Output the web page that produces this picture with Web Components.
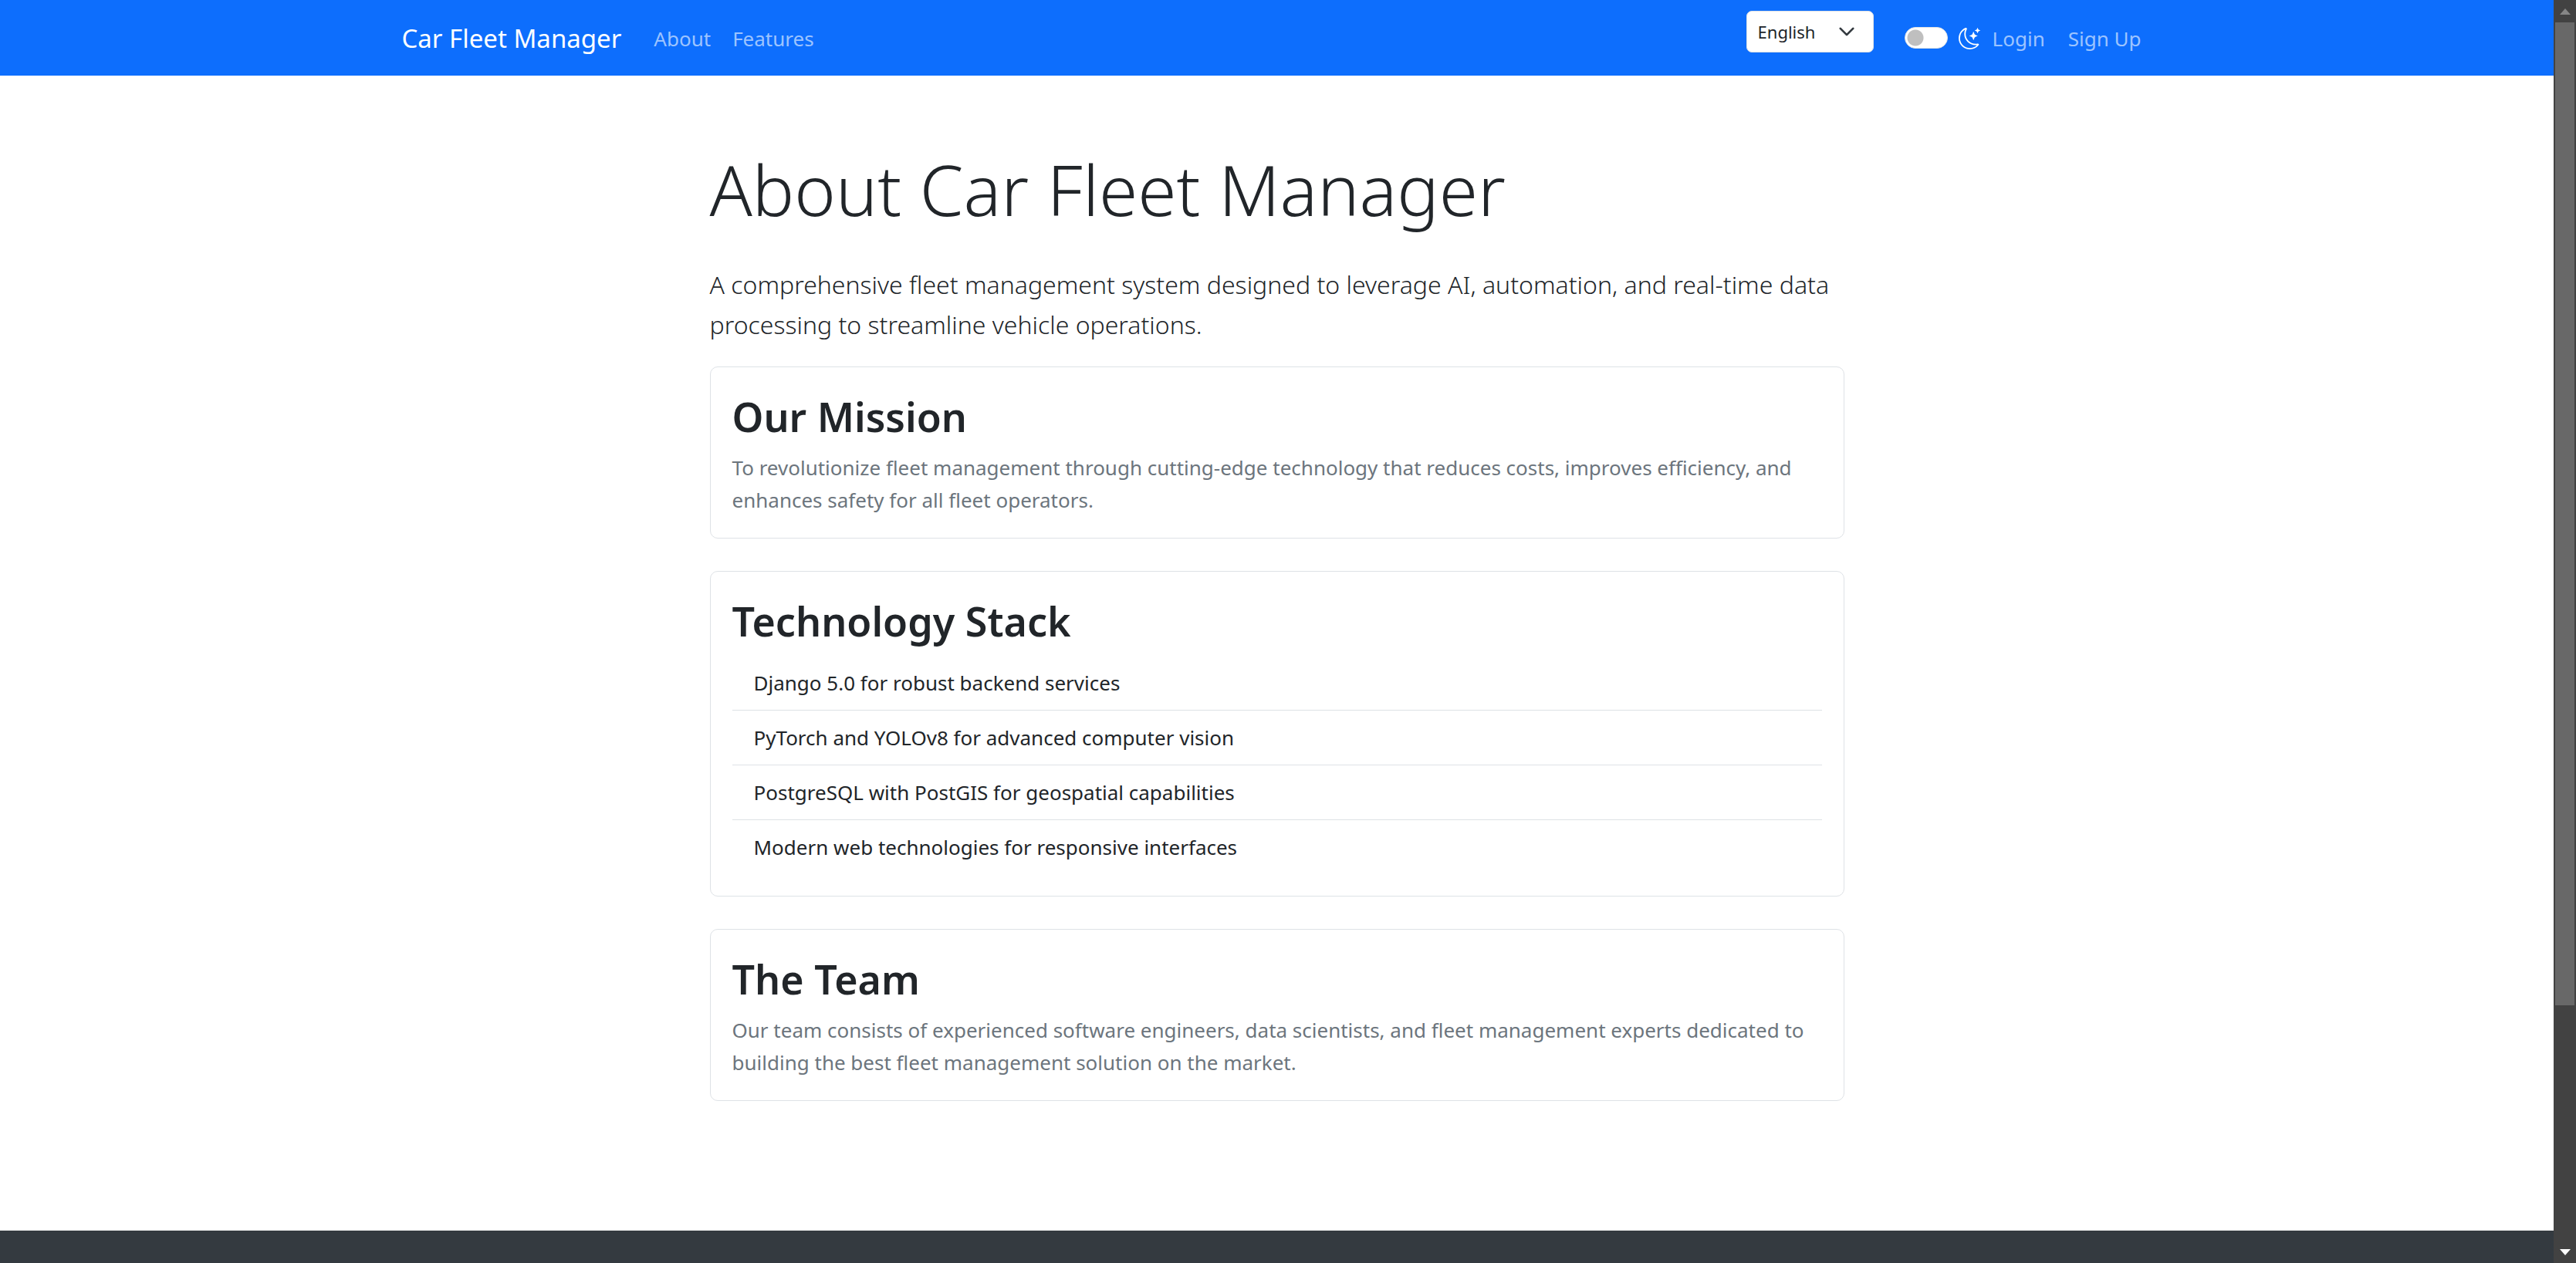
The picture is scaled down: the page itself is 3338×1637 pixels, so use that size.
<!DOCTYPE html>
<html lang="en">
<head>
<meta charset="utf-8">
<title>About - Car Fleet Manager</title>
<style>
  html, body { margin: 0; height: 100%; }
  body {
    display: flex;
    overflow: hidden;
    background: #fff;
    color: #212529;
    font: 400 26px/42px "Noto Sans", "Open Sans", sans-serif;
  }
</style>
</head>
<body>
<fleet-page>
  <fleet-navbar slot="header" brand="Car Fleet Manager">
    <nav-link href="#about">About</nav-link>
    <nav-link href="#features">Features</nav-link>
    <language-select slot="end"></language-select>
    <theme-switch slot="end"></theme-switch>
    <nav-link slot="end" href="#login">Login</nav-link>
    <nav-link slot="end" href="#signup">Sign Up</nav-link>
  </fleet-navbar>
  <about-intro>
    <span slot="title">About Car Fleet Manager</span>
    A comprehensive fleet management system designed to leverage AI, automation, and real-time data processing to streamline vehicle operations.
  </about-intro>
  <info-card heading="Our Mission">
    <muted-text>To revolutionize fleet management through cutting-edge technology that reduces costs, improves efficiency, and enhances safety for all fleet operators.</muted-text>
  </info-card>
  <info-card heading="Technology Stack">
    <tech-list>
      <tech-item>Django 5.0 for robust backend services</tech-item>
      <tech-item>PyTorch and YOLOv8 for advanced computer vision</tech-item>
      <tech-item>PostgreSQL with PostGIS for geospatial capabilities</tech-item>
      <tech-item>Modern web technologies for responsive interfaces</tech-item>
    </tech-list>
  </info-card>
  <info-card heading="The Team">
    <muted-text>Our team consists of experienced software engineers, data scientists, and fleet management experts dedicated to building the best fleet management solution on the market.</muted-text>
  </info-card>
</fleet-page>
<page-scrollbar></page-scrollbar>

<script>
const define = (name, render) => customElements.define(name, class extends HTMLElement {
  constructor() {
    super();
    this.attachShadow({ mode: "open" }).innerHTML = render(this);
  }
});

define("fleet-page", () => `
  <style>
    :host { flex: 1; min-width: 0; height: 100vh; overflow: hidden; display: flex; flex-direction: column; }
    header { flex: none; }
    main {
      flex: none; box-sizing: border-box; width: 100%; max-width: 1470px;
      margin: 0 auto; padding: 84px 0 168px;
      display: flex; flex-direction: column; gap: 42px;
    }
    footer { flex: 1; background: #343a40; }
  </style>
  <header><slot name="header"></slot></header>
  <main><slot></slot></main>
  <footer></footer>`);

define("fleet-navbar", el => `
  <style>
    :host { display: block; background: #0d6efd; }
    nav {
      box-sizing: border-box; max-width: 2310px; height: 98px; margin: 0 auto; padding: 0 21px;
      display: flex; align-items: center;
    }
    .brand { color: #fff; font-size: 33px; line-height: 52px; text-decoration: none; white-space: nowrap; margin-right: 28px; padding-top: 2px; }
    .group { display: flex; align-items: center; height: 100%; }
    .end { margin-left: auto; gap: 2px; }
  </style>
  <nav>
    <a class="brand" href="#home">${el.getAttribute("brand")}</a>
    <div class="group"><slot></slot></div>
    <div class="group end"><slot name="end"></slot></div>
  </nav>`);

define("nav-link", el => `
  <style>
    :host { display: block; }
    a { display: block; padding: 2px 14px 0; color: rgba(255,255,255,.6); text-decoration: none; white-space: nowrap; }
  </style>
  <a href="${el.getAttribute("href")}"><slot></slot></a>`);

define("language-select", () => `
  <style>
    :host { display: grid; align-self: flex-start; width: 165px; margin: 14px 38px 0 0; }
    select, svg { grid-area: 1 / 1; }
    select {
      appearance: none; box-sizing: border-box; width: 100%; height: 54px; margin: 0; padding: 0 56px 0 14px;
      border: 1px solid #dee2e6; border-radius: 7px; background: #fff; color: #212529;
      font: inherit; font-size: 22px; line-height: 38px;
    }
    svg { width: 22px; height: 22px; place-self: center end; margin-right: 24px; pointer-events: none; }
  </style>
  <select aria-label="Language">
    <option>English</option>
    <option>Deutsch</option>
    <option>Français</option>
  </select>
  <svg viewBox="0 0 16 16" aria-hidden="true"><path d="m2 5 6 6 6-6" fill="none" stroke="#343a40" stroke-width="2" stroke-linecap="round" stroke-linejoin="round"/></svg>`);

define("theme-switch", () => `
  <style>
    :host { display: block; }
    label { display: flex; align-items: center; gap: 14px; }
    input {
      appearance: none; box-sizing: border-box; width: 56px; height: 28px; margin: 0;
      border: 1px solid #dee2e6; border-radius: 14px;
      background: #fff radial-gradient(circle at 13px 13px, #bfbfbf 10px, transparent 11px);
    }
    svg { display: block; width: 28px; height: 28px; fill: #fff; padding-top: 2px; }
  </style>
  <label>
    <input type="checkbox" role="switch" aria-label="Dark mode">
    <svg viewBox="0 0 16 16" aria-hidden="true">
      <path d="M6 .278a.77.77 0 0 1 .08.858 7.2 7.2 0 0 0-.878 3.46c0 4.021 3.278 7.277 7.318 7.277q.792-.001 1.533-.16a.79.79 0 0 1 .81.316.73.73 0 0 1-.031.893A8.35 8.35 0 0 1 8.344 16C3.734 16 0 12.286 0 7.71 0 4.266 2.114 1.312 5.124.06A.75.75 0 0 1 6 .278M4.858 1.311A7.27 7.27 0 0 0 1.025 7.71c0 4.02 3.279 7.276 7.319 7.276a7.32 7.32 0 0 0 5.205-2.162q-.506.063-1.029.063c-4.61 0-8.343-3.714-8.343-8.29 0-1.167.242-2.278.681-3.286"/>
      <path d="M10.794 3.148a.217.217 0 0 1 .412 0l.387 1.162c.173.518.579.924 1.097 1.097l1.162.387a.217.217 0 0 1 0 .412l-1.162.387a1.73 1.73 0 0 0-1.097 1.097l-.387 1.162a.217.217 0 0 1-.412 0l-.387-1.162A1.73 1.73 0 0 0 9.31 6.593l-1.162-.387a.217.217 0 0 1 0-.412l1.162-.387a1.73 1.73 0 0 0 1.097-1.097zM13.863.099a.145.145 0 0 1 .274 0l.258.774c.115.346.386.617.732.732l.774.258a.145.145 0 0 1 0 .274l-.774.258a1.16 1.16 0 0 0-.732.732l-.258.774a.145.145 0 0 1-.274 0l-.258-.774a1.16 1.16 0 0 0-.732-.732l-.774-.258a.145.145 0 0 1 0-.274l.774-.258c.346-.115.617-.386.732-.732z"/>
    </svg>
  </label>`);

define("about-intro", () => `
  <style>
    /* the lead sits closer to the first card than the cards sit to each other */
    :host { display: block; margin-bottom: -14px; font-weight: 300; }
    h1 { margin: 0; padding: 4px 0 39px; font-size: 91px; line-height: 118px; font-weight: 300; }
    p { margin: 0; font-size: 32px; line-height: 52px; }
  </style>
  <h1><slot name="title"></slot></h1>
  <p><slot></slot></p>`);

define("info-card", el => `
  <style>
    :host { display: block; box-sizing: border-box; padding: 30px 28px 28px; border: 1px solid #dee2e6; border-radius: 10px; }
    h2 { margin: 0 0 12px; font-size: 52px; line-height: 67px; font-weight: 600; }
  </style>
  <h2>${el.getAttribute("heading")}</h2>
  <slot></slot>`);

define("muted-text", () => `
  <style>
    :host { display: block; color: #6c757d; }
    p { margin: 0; }
  </style>
  <p><slot></slot></p>`);

define("tech-list", () => `
  <style>:host { display: block; }</style>
  <div role="list"><slot></slot></div>`);

define("tech-item", () => `
  <style>
    :host { display: block; padding: 14px 28px; border-bottom: 1px solid #dee2e6; }
    :host(:last-child) { border-bottom: 0; }
  </style>
  <div role="listitem"><slot></slot></div>`);

define("page-scrollbar", () => `
  <style>
    :host { flex: none; width: 29px; height: 100vh; background: #424242; display: flex; flex-direction: column; }
    .arrow { height: 29px; flex: none; display: grid; place-items: center; }
    svg { width: 14px; height: 8px; display: block; }
    .track { flex: 1; display: flex; flex-direction: column; padding: 0 2px; }
    .thumb { flex: 46; background: #686868; }
    .rest { flex: 11; }
  </style>
  <div class="arrow"><svg viewBox="0 0 14 8" fill="#868686"><path d="M7 0l7 8H0z"/></svg></div>
  <div class="track"><div class="thumb"></div><div class="rest"></div></div>
  <div class="arrow"><svg viewBox="0 0 14 8" fill="#fff"><path d="M0 0h14L7 8z"/></svg></div>`);
</script>
</body>
</html>
